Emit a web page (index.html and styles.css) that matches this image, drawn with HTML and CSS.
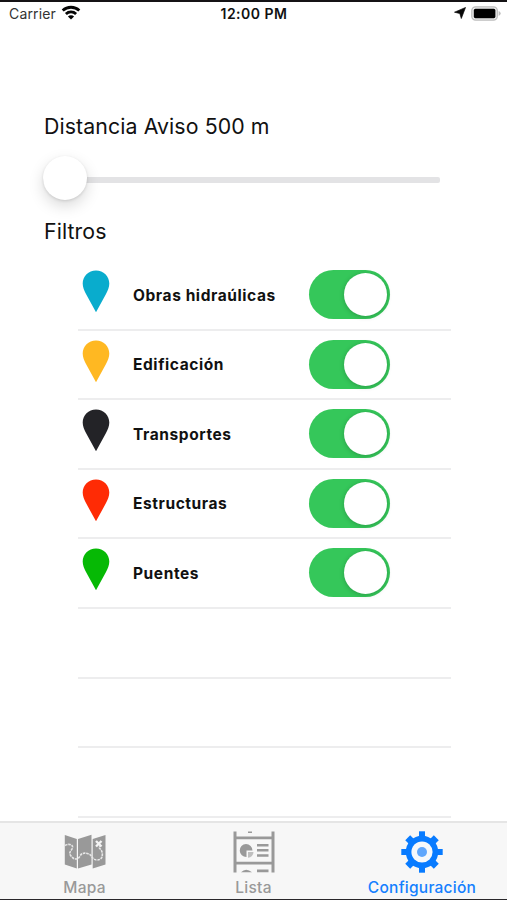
FILE: index.html
```html
<!DOCTYPE html>
<html lang="es">
<head>
<meta charset="utf-8">
<title>Configuración</title>
<link rel="stylesheet" href="styles.css">
</head>
<body>
<svg class="defs" width="0" height="0"><defs>
<symbol id="pin" viewBox="0 0 28 43"><path fill="currentColor" d="M14 .4C6.500 .4.700 6.200.700 13.500c0 4 1.600 7.200 3.300 10.600L14 42.300l10-18.200c1.700-3.400 3.300-6.600 3.300-10.600C27.300 6.200 21.500.4 14 .4Z"/></symbol>
</defs></svg>
<header class="status">
  <div class="carrier"><span>Carrier</span>
    <svg width="20" height="16" viewBox="0 0 20 16" fill="none" stroke="#050505" stroke-width="2.800"><path d="M1.700 5.600a12 12 0 0 1 16.600 0M4.900 9a7.400 7.400 0 0 1 10.200 0"/><path d="M10 14.500 6.900 11.500a4.400 4.400 0 0 1 6.200 0Z" fill="#050505" stroke="none"/></svg>
  </div>
  <div class="clock">12:00 PM</div>
  <div class="power">
    <svg width="12" height="12" viewBox="0 0 12 12"><path d="M11.500.5 7.300 11.500 5.800 6.500.5 5.200Z" fill="#080808" stroke="#080808" stroke-width=".7"/></svg>
    <svg width="31" height="15" viewBox="0 0 31 15"><rect x=".8" y=".8" width="25.500" height="13.300" rx="3.800" fill="#ececec" stroke="#bdbdbd" stroke-width="1.300"/><rect x="2.800" y="2.800" width="21.600" height="9.400" rx="1.600" fill="#000"/><path d="M27.600 5.100Q29.700 6 29.700 7.500T27.600 9.900Z" fill="#bdbdbd"/></svg>
  </div>
</header>
<main>
  <h1 class="distance">Distancia Aviso 500 m</h1>
  <div class="slider"><span class="track"></span><span class="thumb"></span></div>
  <h2 class="filters">Filtros</h2>
  <ul class="list">
    <li><svg class="pin blue"><use href="#pin"/></svg><span class="name">Obras hidraúlicas</span><span class="toggle"><i></i></span></li>
    <li><svg class="pin yellow"><use href="#pin"/></svg><span class="name">Edificación</span><span class="toggle"><i></i></span></li>
    <li><svg class="pin black"><use href="#pin"/></svg><span class="name">Transportes</span><span class="toggle"><i></i></span></li>
    <li><svg class="pin red"><use href="#pin"/></svg><span class="name">Estructuras</span><span class="toggle"><i></i></span></li>
    <li><svg class="pin green"><use href="#pin"/></svg><span class="name">Puentes</span><span class="toggle"><i></i></span></li>
    <li></li><li></li><li></li>
  </ul>
</main>
<nav class="tabs">
  <div class="tab">
    <svg width="42" height="42" viewBox="0 0 42 42"><path fill="#999" d="M.8 4 12.800 8V37.500L.8 33.500ZM14 8 27.500 3.800V33.500L14 37.500ZM28.700 8 41.500 4V33.500L28.700 37.500Z"/><path d="M1 14.500C5 12 9.500 14 8.500 17S4 21 7 25s7 4 9 0 6-3 9-2 3 6 8 6 6-4 5-8-4-3-2-6" fill="none" stroke="#e6e6e6" stroke-width="1.600" stroke-dasharray="2.600 .8"/><path d="m32 10 5.500 5.500m0-5.500-5.500 5.500" stroke="#f4f4f4" stroke-width="2.400"/></svg>
    <span>Mapa</span>
  </div>
  <div class="tab">
    <svg width="42" height="42" viewBox="0 0 42 42"><g fill="#999"><path d="M.5.500H3.500V5.500H38.500V.5H41.500V41.500H38.500V33.500H3.500V41.500H.5ZM3.500 8.300V30.800H38.500V8.300Z" fill-rule="evenodd"/><path d="M15 .5h4v1.500h-4ZM24 13h11.500v2.500H24ZM24 18h11.500v2.500H24ZM24 23.200h11.500v2.600H24ZM24 38.500h11.500v2.800H24ZM8 41.300q5-5 11 0Z"/><path d="M13 13a6.500 6.500 0 0 1 6.500 6.500H13.500V26A6.500 6.500 0 0 1 13 13Z"/><path d="M15 21h5.500a5.800 5.800 0 0 1-5.500 5.800Z" opacity=".6"/></g></svg>
    <span>Lista</span>
  </div>
  <div class="tab active">
    <svg width="42" height="42" viewBox="0 0 42 42"><g fill="#087bff"><path d="M18 .3h6V41.700h-6Z"/><path d="M.3 18v6H41.700v-6Z"/><path d="M17.500 .8h7V41.200h-7Z" transform="rotate(45 21 21)"/><path d="M17.500 .8h7V41.200h-7Z" transform="rotate(-45 21 21)"/><circle cx="21" cy="21" r="16.200"/></g><circle cx="21" cy="21" r="10.600" fill="#f7f9fb"/><circle cx="21" cy="21" r="5" fill="#60a7fc"/></svg>
    <span>Configuración</span>
  </div>
</nav>
</body>
</html>
```

FILE: styles.css
```css
* { box-sizing: border-box; }
body { margin: 0; width: 507px; height: 900px; display: flex; flex-direction: column; overflow: hidden; background: #fff; color: #111; font-family: Inter, "Liberation Sans", sans-serif; border-top: 2px solid #151315; border-bottom: 1px solid #29272a; }
.defs { position: absolute; }
svg { display: block; flex: none; }
.status { height: 24px; flex: none; padding: 0 5px 0 9px; display: grid; grid-template-columns: 1fr auto 1fr; align-items: center; line-height: 20px; }
.carrier { display: flex; align-items: center; gap: 5px; font-size: 14px; letter-spacing: .15px; color: #333; }
.carrier svg { margin-top: -2px; }
.clock { font-size: 14px; font-weight: 600; letter-spacing: .5px; margin-right: 3px; }
.power { display: flex; justify-content: flex-end; align-items: center; gap: 5px; margin-top: -2px; }
main { flex: 1; min-height: 0; overflow: hidden; padding: 84px 56px 0 44px; }
h1, h2 { margin: 0; font-weight: 400; font-size: 21.3px; line-height: 32px; }
.distance { letter-spacing: .1px; }
.filters { letter-spacing: .1px; }
.slider { height: 44px; width: 397px; margin: 14px 0 15px -1px; display: grid; align-items: center; }
.track, .thumb { grid-area: 1 / 1; }
.track { height: 6px; margin-top: 4px; border-radius: 2px; background: #e3e3e5; }
.thumb { width: 44px; height: 44px; border-radius: 50%; background: #fff; box-shadow: 0 6px 15px rgba(0,0,0,.15), 0 1px 3px rgba(0,0,0,.12); }
.list { list-style: none; margin: 14px 0 0 34px; padding: 0; }
.list li { height: 69.600px; border-bottom: 2px solid #ededee; display: flex; align-items: flex-start; }
.pin { width: 28px; height: 43px; margin: 9px 0 0 4px; }
.blue { color: #09accd; } .yellow { color: #ffb822; } .black { color: #232327; } .red { color: #ff2b05; } .green { color: #06b905; }
.name { width: 176px; margin: 24.500px 0 0 23px; font-size: 15.500px; line-height: 20px; font-weight: 700; letter-spacing: .58px; white-space: nowrap; }
.toggle { width: 81px; height: 49px; flex: none; margin: 9px 0 0 -.500px; padding: 3px; border-radius: 25px; background: #35c75a; display: flex; justify-content: flex-end; }
.toggle i { width: 43px; height: 43px; border-radius: 50%; background: #fff; box-shadow: 0 1px 5px rgba(0,0,0,.22); }
.tabs { height: 78px; flex: none; display: grid; grid-template-columns: repeat(3, 1fr); border-top: 2px solid #e5e5e5; background: #f7f7f7; }
.tab { display: flex; flex-direction: column; align-items: center; padding: 8px 0 0; font-size: 15.500px; line-height: 20px; font-weight: 500; letter-spacing: .25px; color: #999; }
.tab span { margin-top: 5px; }
.tab.active { padding-right: 1px; color: #147fff; }
```
